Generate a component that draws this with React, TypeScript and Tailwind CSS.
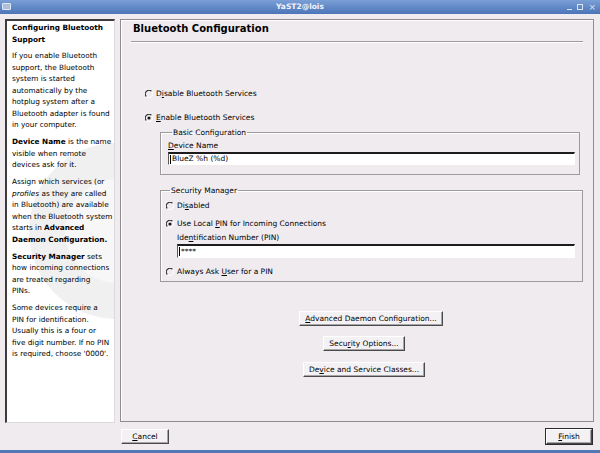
import React from 'react';

// Mnemonic letter, drawn underlined like the Qt accelerator hint.
const U = ({ children }: { children: React.ReactNode }) => (
  <span className="underline decoration-[0.5px] underline-offset-[1px]">{children}</span>
);

function Radio({ checked }: { checked?: boolean }) {
  return (
    <svg width="8" height="8" viewBox="0 0 8 8" className="shrink-0">
      <path d="M6.6 1.4 A3.6 3.6 0 0 0 1.4 6.6" stroke="#2a2a2a" strokeWidth="1.2" fill="none" />
      <path d="M1.4 6.6 A3.6 3.6 0 0 0 6.6 1.4" stroke="#ffffff" strokeWidth="1" fill="none" />
      {checked && <circle cx="4" cy="4" r="1.6" fill="#1a1a1a" />}
    </svg>
  );
}

function RadioRow({ checked, children }: { checked?: boolean; children: React.ReactNode }) {
  return (
    <div className="flex h-[11px] items-center gap-[3px] leading-[11px]">
      <Radio checked={checked} />
      <span>{children}</span>
    </div>
  );
}

function Button({ children, className = '' }: { children: React.ReactNode; className?: string }) {
  return (
    <button
      type="button"
      className={`h-[15px] border-t border-l border-b border-r border-t-white border-l-white border-b-[#4a4a4a] border-r-[#4a4a4a] bg-[#f3f1f3] px-[5px] leading-[12px] shadow-[inset_-1px_-1px_0_#a8a5a8] ${className}`}
    >
      {children}
    </button>
  );
}

function TextInput({ value, className = '' }: { value: string; className?: string }) {
  return (
    <div
      className={`flex items-center border-t-2 border-l border-b border-r border-t-[#1c1c1c] border-l-[#5a5a5a] border-b-white border-r-white bg-white pl-[1px] ${className}`}
    >
      <span className="mr-[1px] h-[9px] w-px bg-black" />
      <span className="leading-[10px]">{value}</span>
    </div>
  );
}

function Group({ label, className = '', children }: { label: string; className?: string; children: React.ReactNode }) {
  return (
    <fieldset className={`border border-[#9d9a9d] shadow-[inset_1px_1px_0_#ffffff] ${className}`}>
      <legend className="ml-[4px] px-[1px] leading-[11px]">{label}</legend>
      {children}
    </fieldset>
  );
}

export default function App() {
  return (
    <div className="flex h-[453px] w-[600px] flex-col overflow-hidden bg-[#efebef] font-['DejaVu_Sans',sans-serif] text-[7.5px] text-black">
      {/* window title bar */}
      <div className="relative flex h-[14px] shrink-0 items-center justify-center bg-gradient-to-b from-[#7b9fd6] to-[#4c75b8]">
        <div className="absolute left-[2px] top-[3px] h-[7px] w-[9px] rounded-[1px] border border-[#dfe7f4] bg-[#aebfdc]" />
        <span className="font-bold text-[#f2f5fb]">YaST2@lois</span>
        <div className="absolute right-[4px] top-0 flex h-[14px] items-center gap-[5px] text-[#dbe4f3]">
          <span className="mt-[4px] h-px w-[5px] bg-[#dbe4f3]" />
          <span className="h-[6px] w-[6px] border border-[#dbe4f3]" />
          <span className="text-[9px] leading-none">×</span>
        </div>
      </div>

      <div className="flex flex-1 flex-col pt-[5px]">
        <div className="flex h-[404px] gap-[5px] pl-[5px] pr-[6px]">
          {/* help pane */}
          <div className="relative w-[110px] shrink-0 overflow-hidden border-t-2 border-l-2 border-b border-r border-t-[#3c3c3c] border-l-[#3c3c3c] border-b-[#dcdadc] border-r-[#dcdadc] bg-white pl-[5px] pt-[1px] text-[7.3px] leading-[11.5px]">
            <svg className="absolute left-[18px] top-[105px]" width="120" height="210" viewBox="0 0 120 210">
              <circle cx="92" cy="105" r="88" fill="#f0f0f1" />
              <circle cx="92" cy="105" r="52" fill="#f7f7f8" />
            </svg>
            <div className="relative whitespace-nowrap">
              <p className="mb-[5px] font-bold">
                Configuring Bluetooth
                <br />
                Support
              </p>
              <p className="mb-[5.5px]">
                If you enable Bluetooth
                <br />
                support, the Bluetooth
                <br />
                system is started
                <br />
                automatically by the
                <br />
                hotplug system after a
                <br />
                Bluetooth adapter is found
                <br />
                in your computer.
              </p>
              <p className="mb-[5.5px]">
                <b>Device Name</b> is the name
                <br />
                visible when remote
                <br />
                devices ask for it.
              </p>
              <p className="mb-[5.5px]">
                Assign which services (or
                <br />
                <i>profiles</i> as they are called
                <br />
                in Bluetooth) are available
                <br />
                when the Bluetooth system
                <br />
                starts in <b>Advanced</b>
                <br />
                <b>Daemon Configuration.</b>
              </p>
              <p className="mb-[5.5px]">
                <b>Security Manager</b> sets
                <br />
                how incoming connections
                <br />
                are treated regarding
                <br />
                PINs.
              </p>
              <p>
                Some devices require a
                <br />
                PIN for identification.
                <br />
                Usually this is a four or
                <br />
                five digit number. If no PIN
                <br />
                is required, choose '0000'.
              </p>
            </div>
          </div>

          {/* main pane */}
          <div className="flex h-[403px] flex-1 flex-col border border-[#8f8c8f] shadow-[inset_1px_1px_0_#ffffff]">
            <div className="pl-[12px] pt-[3px] text-[10px] font-bold leading-[12px]">Bluetooth Configuration</div>
            <div className="mx-[10px] mt-[6px] h-[2px] border-t border-t-[#9f9c9f] border-b border-b-white" />

            <div className="flex flex-col pl-[24px] pr-[10px] pt-[45px]">
              <RadioRow>
                D<U>i</U>sable Bluetooth Services
              </RadioRow>
              <div className="mt-[13px]">
                <RadioRow checked>
                  <U>E</U>nable Bluetooth Services
                </RadioRow>
              </div>

              <Group label="Basic Configuration" className="ml-[15px] mr-[3px] mt-[4px] pb-[9px] pl-[7px] pr-[4px]">
                <div className="mt-[2px] leading-[11px]">
                  <U>D</U>evice Name
                </div>
                <TextInput value="BlueZ %h (%d)" className="mt-px h-[13px]" />
              </Group>

              <Group label="Security Manager" className="ml-[15px] mt-[10px] pb-[4px] pl-[5px] pr-[7px]">
                <div className="mt-[4px]">
                  <RadioRow>
                    Di<U>s</U>abled
                  </RadioRow>
                </div>
                <div className="mt-[7px]">
                  <RadioRow checked>
                    Use Local <U>P</U>IN for Incoming Connections
                  </RadioRow>
                </div>
                <div className="ml-[11px] mt-[3px] leading-[11px]">
                  Ide<U>n</U>tification Number (PIN)
                </div>
                <TextInput value="****" className="ml-[11px] mt-px h-[14px]" />
                <div className="mt-[8px]">
                  <RadioRow>
                    Always Ask <U>U</U>ser for a PIN
                  </RadioRow>
                </div>
              </Group>

              <div className="mt-[29px] flex flex-col items-center gap-[10px]">
                <Button className="ml-[14px]">
                  <U>A</U>dvanced Daemon Configuration...
                </Button>
                <Button>
                  Secu<U>r</U>ity Options...
                </Button>
                <Button className="mt-px">
                  De<U>v</U>ice and Service Classes...
                </Button>
              </div>
            </div>
          </div>
        </div>

        {/* wizard buttons */}
        <div className="mt-[5px] flex items-start justify-between pl-[121px] pr-[7px]">
          <Button className="mt-px w-[48px]">
            <U>C</U>ancel
          </Button>
          <div className="border border-[#2c2c2c] p-0">
            <Button className="w-[46px]">
              <U>F</U>inish
            </Button>
          </div>
        </div>
      </div>

      <div className="h-[3px] shrink-0 bg-[#5478b4]" />
    </div>
  );
}
